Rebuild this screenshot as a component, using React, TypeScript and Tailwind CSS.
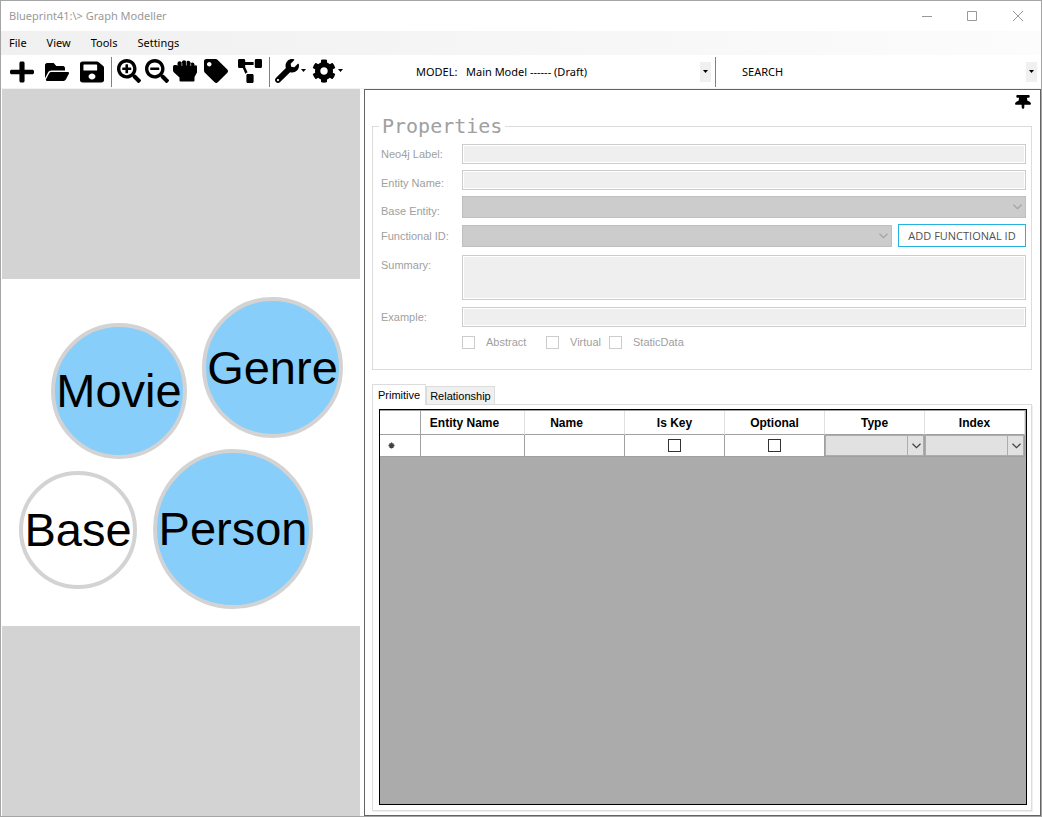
import { useState } from "react";
import type { ReactNode } from "react";
import {
  FaPlus,
  FaFolderOpen,
  FaSave,
  FaSearchPlus,
  FaSearchMinus,
  FaTag,
  FaProjectDiagram,
  FaWrench,
  FaCog,
  FaThumbtack,
} from "react-icons/fa";

function ToolButton({ label, menu, children }: { label: string; menu?: boolean; children: ReactNode }) {
  return (
    <button type="button" aria-label={label} className="flex items-center gap-0.5 text-black">
      {children}
      {menu && <Caret />}
    </button>
  );
}

function Caret() {
  return (
    <svg viewBox="0 0 5 3" className="h-[3px] w-[5px] shrink-0" fill="currentColor" aria-hidden="true">
      <path d="M0 0h5L2.500 3z" />
    </svg>
  );
}

function Separator() {
  return <div className="h-[30px] w-px shrink-0 bg-[#808080]" />;
}

function HandIcon() {
  return (
    <svg viewBox="0 0 24 24" className="size-6" fill="currentColor" aria-hidden="true">
      <path d="M0 7.500Q0 6 1.500 6H3q1.200 0 1.500 1V4Q4.700 2.300 6.500 2.300 8.300 2.300 8.900 4V3Q9.200 1.300 11 1.300t2.400 1.900V3.100Q14 1.700 15.600 1.800 17.400 2 17.700 4V4.600Q18.300 3.300 19.800 3.500 21.300 3.800 21.500 5.500V7Q21.900 6 23 6.200 24 6.500 24 7.800V13.500L21.500 18V21.500Q21.500 22.500 20.500 22.500H7.500Q6.500 22.500 6.500 21.500V18.500L1 13.500Q0 12.500 0 11.500z" />
      <path d="M8.900 4v3M13.400 3v3.500M17.700 4.500v2.500" fill="none" stroke="#fff" strokeWidth=".6" />
    </svg>
  );
}

function Chevron({ className }: { className: string }) {
  return (
    <svg viewBox="0 0 9 6" className={className} fill="none" stroke="currentColor" strokeWidth="1.200" aria-hidden="true">
      <path d="M.5 .75l4 4 4-4" />
    </svg>
  );
}

const nodes = [
  { name: "Movie", box: "left-[49px] top-[44px] size-[136px] bg-[#87cefa]" },
  { name: "Genre", box: "left-[200px] top-[18px] size-[141px] bg-[#87cefa]" },
  { name: "Base", box: "left-[17px] top-[192px] size-[118px] bg-white" },
  { name: "Person", box: "left-[151px] top-[170px] size-[160px] bg-[#87cefa]" },
];

const field = "w-full border border-[#cccccc] bg-[#efefef] shadow-[inset_0_0_0_1px_#fff] resize-none outline-none";
const fieldLabel = "text-[11px] leading-[14px] text-[#a0a0a0]";

function Combo({ id }: { id: string }) {
  return (
    <div className="relative h-[22px] min-w-0 flex-1 self-end text-[#a3a3a3]">
      <select id={id} disabled className="block h-full w-full appearance-none border border-[#bfbfbf] bg-[#cccccc] opacity-100" />
      <Chevron className="pointer-events-none absolute right-1 top-2 h-1.5 w-[9px]" />
    </div>
  );
}

function Check({ label, className }: { label: string; className: string }) {
  return (
    <label className={`flex items-center gap-[11px] ${fieldLabel} ${className}`}>
      <input type="checkbox" disabled className="size-[13px] shrink-0 appearance-none border border-[#cccccc] bg-white" />
      {label}
    </label>
  );
}

function Properties() {
  return (
    <fieldset className="min-w-0 border border-[#dcdcdc] pb-[19px] pl-2 pr-[5px] pt-1.5">
      <legend className="-ml-0.5 px-[3px] font-['DejaVu_Sans_Mono',monospace] text-[20px] leading-6 text-[#a0a0a0]">
        Properties
      </legend>
      <div className="grid grid-cols-[81px_minmax(0,1fr)] items-center gap-y-1.5">
        <label htmlFor="neo" className={fieldLabel}>Neo4j Label:</label>
        <input id="neo" disabled className={`${field} h-5`} />
        <label htmlFor="entity" className={`${fieldLabel} self-end`}>Entity Name:</label>
        <input id="entity" disabled className={`${field} h-5`} />
        <label htmlFor="base" className={`${fieldLabel} self-end`}>Base Entity:</label>
        <Combo id="base" />
        <label htmlFor="functional" className={fieldLabel}>Functional ID:</label>
        <div className="flex gap-1.5">
          <Combo id="functional" />
          <button type="button" className="h-[23px] w-32 border border-[#26b3e4] bg-white font-['Open_Sans',sans-serif] text-[11px] leading-4 text-[#505050]">
            ADD FUNCTIONAL ID
          </button>
        </div>
      </div>
      <div className="mt-2 grid grid-cols-[81px_minmax(0,1fr)] items-center gap-y-[7px]">
        <label htmlFor="summary" className={`${fieldLabel} self-start pt-[3px]`}>Summary:</label>
        <textarea id="summary" disabled className={`${field} block h-[45px]`} />
        <label htmlFor="example" className={fieldLabel}>Example:</label>
        <input id="example" disabled className={`${field} h-5`} />
        <div className="col-start-2 flex h-4">
          <Check label="Abstract" className="w-[84px]" />
          <Check label="Virtual" className="w-[63px]" />
          <Check label="StaticData" className="" />
        </div>
      </div>
    </fieldset>
  );
}

const columns = ["Entity Name", "Name", "Is Key", "Optional", "Type", "Index"];

function CellSelect({ label }: { label: string }) {
  return (
    <div className="relative h-[21px] text-[#404040]">
      <select aria-label={label} className="block h-full w-full appearance-none border border-[#adadad] bg-[#e1e1e1]" />
      <span className="pointer-events-none absolute inset-y-0 right-0 flex w-[17px] items-center justify-center border-l border-[#adadad]">
        <Chevron className="h-1.5 w-[9px]" />
      </span>
    </div>
  );
}

function DataGrid() {
  const cell = "border-b border-r border-[#a0a0a0] p-0";
  return (
    <div className="min-h-0 flex-1 border border-black bg-[#ababab] pr-px">
      <table className="w-full table-fixed border-separate border-spacing-0 border-t border-[#a0a0a0] bg-white">
        <colgroup>
          <col className="w-[41px]" />
          <col className="w-[104px]" />
          <col span={5} />
        </colgroup>
        <thead>
          <tr className="h-6 text-[12px] leading-4">
            <th className={cell} aria-label="Row" />
            {columns.map((name, i) => (
              <th
                key={name}
                scope="col"
                className={`border-b border-r border-b-[#a0a0a0] border-r-[#e0e0e0] p-0 text-center font-bold ${i < 2 ? "pr-4" : ""}`}
              >
                {name}
              </th>
            ))}
          </tr>
        </thead>
        <tbody>
          <tr className="h-[22px]">
            <td className={cell}>
              <svg viewBox="0 0 7 7" className="ml-2 size-[7px]" stroke="#404040" strokeWidth="1.400" aria-hidden="true">
                <path d="M3.500 .5v6M.5 3.500h6M1.500 1.500l4 4M5.500 1.500l-4 4" />
              </svg>
            </td>
            <td className={cell}><input aria-label="Entity Name" className="block h-5 w-full outline-none" /></td>
            <td className={cell}><input aria-label="Name" className="block h-5 w-full outline-none" /></td>
            <td className={cell}>
              <input type="checkbox" aria-label="Is Key" className="mx-auto block size-[13px] appearance-none border border-[#333333] bg-white" />
            </td>
            <td className={cell}>
              <input type="checkbox" aria-label="Optional" className="mx-auto block size-[13px] appearance-none border border-[#333333] bg-white" />
            </td>
            <td className={cell}><CellSelect label="Type" /></td>
            <td className={cell}><CellSelect label="Index" /></td>
          </tr>
        </tbody>
      </table>
    </div>
  );
}

export default function App() {
  const [tab, setTab] = useState("Primitive");
  return (
    <div className="flex h-screen flex-col border border-[#a5a5a5] bg-white font-['Liberation_Sans',sans-serif] text-black">
      <header className="flex h-[30px] shrink-0 items-center justify-between pl-2 text-[#999999]">
        <h1 className="font-['Noto_Sans',sans-serif] text-[11px] leading-4">Blueprint41:\&gt; Graph Modeller</h1>
        <div className="flex">
          <button type="button" aria-label="Minimize" className="flex h-[29px] w-[45px] items-center justify-center">
            <svg viewBox="0 0 10 10" className="size-2.5" stroke="currentColor" shapeRendering="crispEdges"><path d="M0 5.500h10" /></svg>
          </button>
          <button type="button" aria-label="Maximize" className="flex h-[29px] w-[46px] items-center justify-center">
            <svg viewBox="0 0 10 10" className="size-2.5" fill="none" stroke="currentColor"><path d="M.5 .5h9v9h-9z" /></svg>
          </button>
          <button type="button" aria-label="Close" className="flex h-[29px] w-[46px] items-center justify-center">
            <svg viewBox="0 0 10 10" className="size-2.5" stroke="currentColor"><path d="M0 0l10 10M10 0L0 10" /></svg>
          </button>
        </div>
      </header>

      <nav className="flex h-6 shrink-0 items-center gap-5 bg-linear-to-r from-[#f0f0f0] to-[#fcfcfc] px-2 font-['Noto_Sans',sans-serif] text-[11px] leading-4">
        <button type="button">File</button>
        <button type="button">View</button>
        <button type="button">Tools</button>
        <button type="button">Settings</button>
      </nav>

      <div className="flex h-[34px] shrink-0 items-center border-b border-[#f3f3f3] pl-[9px] pr-1 font-['Noto_Sans',sans-serif] text-[11px] leading-4">
        <div className="flex gap-[11px] pr-[7px]">
          <ToolButton label="New"><FaPlus preserveAspectRatio="none" className="size-6" /></ToolButton>
          <ToolButton label="Open"><FaFolderOpen preserveAspectRatio="none" className="size-6" /></ToolButton>
          <ToolButton label="Save"><FaSave preserveAspectRatio="none" className="size-6" /></ToolButton>
        </div>
        <Separator />
        <div className="flex gap-1 pb-0.5 pl-[5px]">
          <ToolButton label="Zoom in"><FaSearchPlus className="size-6" /></ToolButton>
          <ToolButton label="Zoom out"><FaSearchMinus className="size-6" /></ToolButton>
          <ToolButton label="Pan"><HandIcon /></ToolButton>
        </div>
        <div className="flex gap-2.5 px-[7px] pb-0.5">
          <ToolButton label="Labels"><FaTag className="size-6" /></ToolButton>
          <ToolButton label="Layout"><FaProjectDiagram preserveAspectRatio="none" className="size-6" /></ToolButton>
        </div>
        <Separator />
        <div className="flex gap-1.5 pb-0.5 pl-[5px]">
          <ToolButton label="Options" menu><FaWrench className="size-6" /></ToolButton>
          <ToolButton label="Configuration" menu><FaCog className="size-6" /></ToolButton>
        </div>
        <div className="ml-[73px] flex min-w-0 flex-[60] items-center">
          <label htmlFor="model" className="w-[50px] shrink-0">MODEL:</label>
          <div className="relative min-w-0 flex-1 pr-1">
            <select id="model" className="block h-5 w-full appearance-none bg-white outline-none">
              <option>Main Model ------ (Draft)</option>
            </select>
            <span className="pointer-events-none absolute inset-y-0 right-1 flex w-[11px] items-center justify-center bg-[#f0f0f0]"><Caret /></span>
          </div>
          <Separator />
        </div>
        <div className="flex min-w-0 flex-[59] items-center pl-[26px]">
          <label htmlFor="search">SEARCH</label>
          <input id="search" className="h-5 min-w-0 flex-1 outline-none" />
          <button type="button" aria-label="Search options" className="flex h-5 w-[11px] items-center justify-center bg-[#f0f0f0]"><Caret /></button>
        </div>
      </div>

      <main className="flex min-h-0 flex-1 gap-1 pl-px">
        <section aria-label="Graph" className="flex w-[358px] shrink-0 flex-col justify-center bg-[#d3d3d3]">
          <div className="relative h-[347px] bg-white">
            {nodes.map((node) => (
              <div
                key={node.name}
                className={`absolute flex items-center justify-center rounded-full border-4 border-[#d3d3d3] text-[47px] leading-[54px] ${node.box}`}
              >
                {node.name}
              </div>
            ))}
          </div>
        </section>

        <section aria-label="Details" className="flex min-w-0 flex-1 flex-col border border-[#646464] pb-1 pl-[7px] pr-2">
          <div className="flex h-6 shrink-0 items-start justify-end pr-px pt-[5px]">
            <button type="button" aria-label="Pin panel">
              <FaThumbtack preserveAspectRatio="none" className="h-3.5 w-4" />
            </button>
          </div>
          <Properties />
          <div role="tablist" className="mt-3.5 flex shrink-0 items-end text-[11px] leading-4">
            {["Primitive", "Relationship"].map((name) => (
              <button
                key={name}
                type="button"
                role="tab"
                aria-selected={tab === name}
                onClick={() => setTab(name)}
                className={
                  tab === name
                    ? "relative z-10 -mb-px h-[21px] border border-b-0 border-[#dcdcdc] bg-white px-[5px]"
                    : "h-[18px] border border-b-0 border-[#dcdcdc] bg-[#f0f0f0] px-[3px]"
                }
              >
                {name}
              </button>
            ))}
          </div>
          <div className="flex min-h-0 flex-1 flex-col border border-[#dcdcdc] px-1.5 pb-[5px] pr-1 pt-1 shadow-[1px_1px_0_#f0f0f0]">
            <DataGrid />
          </div>
        </section>
      </main>
    </div>
  );
}
